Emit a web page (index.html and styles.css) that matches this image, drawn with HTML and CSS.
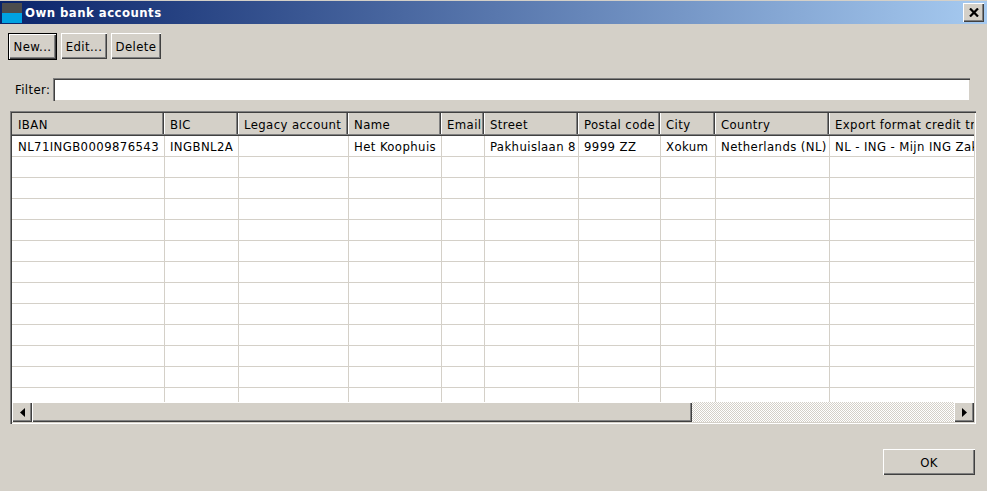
FILE: index.html
```html
<!DOCTYPE html>
<html lang="en">
<head>
    <meta charset="UTF-8">
    <title>Own bank accounts</title>
    <link rel="stylesheet" href="styles.css">
</head>
<body>
    <header class="titlebar">
        <span class="app-icon"></span>
        <h1>Own bank accounts</h1>
        <button class="close" aria-label="Close">
            <svg width="10" height="9" viewBox="0 0 10 9"><path d="M1 .5l8 8M9 .5l-8 8" fill="none" stroke="#000" stroke-width="2.2"/></svg>
        </button>
    </header>
    <div class="toolbar">
        <button class="button default btn-new">New...</button>
        <button class="button btn-edit">Edit...</button>
        <button class="button btn-delete">Delete</button>
    </div>
    <div class="filter">
        <label for="filter">Filter:</label>
        <input id="filter" type="text">
    </div>
    <div class="grid-frame">
        <div class="grid-view">
            <table>
                <colgroup>
                    <col class="c-iban"><col class="c-bic"><col class="c-legacy"><col class="c-name"><col class="c-email">
                    <col class="c-street"><col class="c-postal"><col class="c-city"><col class="c-country"><col class="c-export">
                </colgroup>
                <thead>
                    <tr>
                        <th>IBAN</th><th>BIC</th><th>Legacy account</th><th>Name</th><th>Email</th>
                        <th>Street</th><th>Postal code</th><th>City</th><th>Country</th><th>Export format credit transfer</th>
                    </tr>
                </thead>
                <tbody>
                    <tr>
                        <td>NL71INGB0009876543</td><td>INGBNL2A</td><td></td><td>Het Koophuis</td><td></td>
                        <td>Pakhuislaan 8</td><td>9999 ZZ</td><td>Xokum</td><td>Netherlands (NL)</td><td>NL - ING - Mijn ING Zakelijk</td>
                    </tr>
                    <tr><td></td><td></td><td></td><td></td><td></td><td></td><td></td><td></td><td></td><td></td></tr>
                    <tr><td></td><td></td><td></td><td></td><td></td><td></td><td></td><td></td><td></td><td></td></tr>
                    <tr><td></td><td></td><td></td><td></td><td></td><td></td><td></td><td></td><td></td><td></td></tr>
                    <tr><td></td><td></td><td></td><td></td><td></td><td></td><td></td><td></td><td></td><td></td></tr>
                    <tr><td></td><td></td><td></td><td></td><td></td><td></td><td></td><td></td><td></td><td></td></tr>
                    <tr><td></td><td></td><td></td><td></td><td></td><td></td><td></td><td></td><td></td><td></td></tr>
                    <tr><td></td><td></td><td></td><td></td><td></td><td></td><td></td><td></td><td></td><td></td></tr>
                    <tr><td></td><td></td><td></td><td></td><td></td><td></td><td></td><td></td><td></td><td></td></tr>
                    <tr><td></td><td></td><td></td><td></td><td></td><td></td><td></td><td></td><td></td><td></td></tr>
                    <tr><td></td><td></td><td></td><td></td><td></td><td></td><td></td><td></td><td></td><td></td></tr>
                    <tr><td></td><td></td><td></td><td></td><td></td><td></td><td></td><td></td><td></td><td></td></tr>
                    <tr><td></td><td></td><td></td><td></td><td></td><td></td><td></td><td></td><td></td><td></td></tr>
                </tbody>
            </table>
        </div>
        <div class="scrollbar">
            <span class="arrow"><svg width="5" height="9" viewBox="0 0 5 9"><path d="M5 0v9L0 4.5z"/></svg></span>
            <span class="thumb"></span>
            <span class="track"></span>
            <span class="arrow"><svg width="5" height="9" viewBox="0 0 5 9"><path d="M0 0v9l5-4.5z"/></svg></span>
        </div>
    </div>
    <div class="actions">
        <button class="button ok">OK</button>
    </div>
</body>
</html>
```

FILE: styles.css
```css
html, body {
    height: 100%;
}
body {
    margin: 0;
    background-color: #d4d0c8;
    color: #000;
    font-family: 'DejaVu Sans Condensed', 'DejaVu Sans', sans-serif;
    font-stretch: condensed;
    font-size: 13px;
    letter-spacing: 0.4px;
    overflow: hidden;
}
.titlebar {
    display: flex;
    align-items: center;
    height: 24px;
    padding: 0 3px 0 2px;
    box-sizing: border-box;
    border-top: 1px solid #d4d0c8;
    background: linear-gradient(to right, #0a246a, #a6caf0);
}
.titlebar h1 {
    flex: 1;
    margin: 0 0 0 3px;
    color: #fff;
    font-size: 13px;
    font-weight: bold;
    letter-spacing: 0.47px;
}
.app-icon {
    width: 20px;
    height: 20px;
    background: linear-gradient(to bottom, #4d4d4d 50%, #00a2e2 50%);
}
.close {
    display: flex;
    align-items: center;
    justify-content: center;
    width: 21px;
    height: 19px;
    padding: 0;
    border: 0;
    background-color: #d4d0c8;
    box-shadow: inset 1px 1px 0 #fff, inset -1px -1px 0 #404040, inset -2px -2px 0 #808080;
}
.toolbar {
    display: flex;
    gap: 4px;
    padding: 9px 8px 0;
}
.button {
    height: 26px;
    padding: 0;
    border: 0;
    background-color: #d4d0c8;
    color: #000;
    font: inherit;
    letter-spacing: inherit;
    box-shadow: inset 1px 1px 0 #fff, inset -1px -1px 0 #404040, inset -2px -2px 0 #808080;
}
.button.default {
    height: 25px;
    margin: 1px 1px 0;
    box-shadow: 0 0 0 1px #000, inset 1px 1px 0 #fff, inset -1px -1px 0 #404040, inset -2px -2px 0 #808080;
}
.btn-new { width: 47px; }
.btn-edit { width: 46px; }
.btn-delete { width: 50px; }
.filter {
    display: flex;
    align-items: center;
    gap: 6px;
    padding: 19px 17px 0 15px;
}
.filter label {
    width: 32px;
}
.filter input {
    flex: 1;
    height: 23px;
    padding: 0;
    box-sizing: border-box;
    border: 0;
    background-color: #fff;
    box-shadow: inset 1px 1px 0 #808080, inset 2px 2px 0 #404040, inset -1px -1px 0 #d4d0c8;
}
.grid-frame {
    display: flex;
    flex-direction: column;
    width: 966px;
    height: 313px;
    box-sizing: border-box;
    margin: 10px 0 0 10px;
    padding: 2px;
    background-color: #fff;
    box-shadow: inset 1px 1px 0 #808080, inset 2px 2px 0 #404040, inset -1px -1px 0 #fff, inset -2px -2px 0 #d4d0c8;
}
.grid-view {
    flex: 1;
    overflow: hidden;
}
table {
    width: 1100px;
    table-layout: fixed;
    border-collapse: separate;
    border-spacing: 0;
}
.c-iban { width: 153px; }
.c-bic { width: 74px; }
.c-legacy { width: 110px; }
.c-name { width: 93px; }
.c-email { width: 43px; }
.c-street { width: 94px; }
.c-postal { width: 82px; }
.c-city { width: 55px; }
.c-country { width: 114px; }
.c-export { width: 282px; }
th {
    height: 23px;
    padding: 0 0 0 5px;
    box-sizing: border-box;
    background-color: #d4d0c8;
    font-weight: normal;
    text-align: left;
    white-space: nowrap;
    overflow: hidden;
    box-shadow: inset 0 -1px 0 #404040, inset 0 -2px 0 #808080, inset -1px 0 0 #fff, inset -2px 0 0 #404040, inset -3px 0 0 #808080;
}
td {
    height: 21px;
    padding: 0 0 0 5px;
    box-sizing: border-box;
    background-color: #fff;
    white-space: nowrap;
    overflow: hidden;
    border-right: 1px solid #d4d0c8;
    border-bottom: 1px solid #d4d0c8;
}
th:first-child, td:first-child {
    padding-left: 6px;
}
.scrollbar {
    display: flex;
    flex-shrink: 0;
    height: 20px;
}
.arrow {
    display: flex;
    align-items: center;
    justify-content: center;
    width: 20px;
    background-color: #d4d0c8;
    box-shadow: inset 1px 1px 0 #fff, inset -1px -1px 0 #404040, inset -2px -2px 0 #808080;
}
.thumb {
    width: 660px;
    background-color: #d4d0c8;
    box-shadow: inset 1px 1px 0 #fff, inset -1px -1px 0 #404040, inset -2px -2px 0 #808080;
}
.track {
    flex: 1;
    background: repeating-conic-gradient(#fff 0 25%, #d4d0c8 0 50%) 0 0 / 2px 2px;
}
.actions {
    display: flex;
    justify-content: flex-end;
    padding: 25px 12px 0 0;
}
.ok {
    width: 92px;
}
```
